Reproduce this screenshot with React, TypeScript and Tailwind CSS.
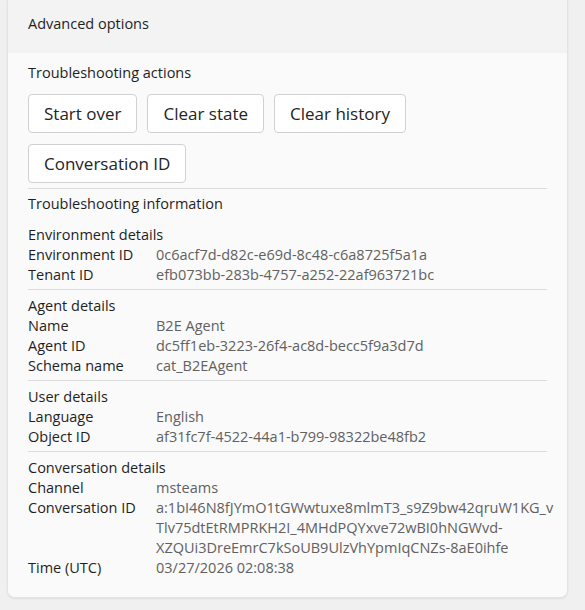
import React from "react";

const font = { fontFamily: '"Open Sans", "Noto Sans", sans-serif' };

function Row({ label, children }: { label: string; children: React.ReactNode }) {
  return (
    <div className="grid grid-cols-[128px_1fr]">
      <div className="text-[#1f1f1f]">{label}</div>
      <div className="text-[#616161]">{children}</div>
    </div>
  );
}

function Btn({ children }: { children: React.ReactNode }) {
  return (
    <button className="h-[39px] px-[15px] rounded-[4px] border border-[#d1d1d1] bg-white text-[17px] text-[#242424] leading-none">
      {children}
    </button>
  );
}

export default function App() {
  return (
    <div
      className="min-h-[610px] w-[585px] bg-[#f0f0f0] pl-[7px] pb-[14px] text-[14.5px] leading-[20px]"
      style={font}
    >
      <div className="w-[561px] border-x border-b border-[#e3e3e3] rounded-b-[8px] overflow-hidden shadow-[0_1px_2px_rgba(0,0,0,0.08)]">
        <div className="h-[53px] bg-[#f3f3f3] px-[20px] pt-[14px] text-[#1f1f1f]">Advanced options</div>
        <div className="bg-[#fafafa] px-[20px] pt-[10px] pb-[19px]">
          <div className="text-[#1f1f1f]">Troubleshooting actions</div>
          <div className="mt-[11px] flex flex-wrap gap-x-[10px] gap-y-[11px] w-[400px]">
            <Btn>Start over</Btn>
            <Btn>Clear state</Btn>
            <Btn>Clear history</Btn>
            <Btn>Conversation ID</Btn>
          </div>
          <div className="mt-[5px] border-t border-[#dcdcdc]" />
          <div className="mt-[5px] text-[#1f1f1f]">Troubleshooting information</div>
          <div className="mt-[11px] pb-[4px]">
            <div className="text-[#1f1f1f]">Environment details</div>
            <Row label="Environment ID">0c6acf7d-d82c-e69d-8c48-c6a8725f5a1a</Row>
            <Row label="Tenant ID">efb073bb-283b-4757-a252-22af963721bc</Row>
          </div>
          <div className="border-t border-[#dcdcdc] pt-[6px] pb-[4px]">
            <div className="text-[#1f1f1f]">Agent details</div>
            <Row label="Name">B2E Agent</Row>
            <Row label="Agent ID">dc5ff1eb-3223-26f4-ac8d-becc5f9a3d7d</Row>
            <Row label="Schema name">cat_B2EAgent</Row>
          </div>
          <div className="border-t border-[#dcdcdc] pt-[6px] pb-[4px]">
            <div className="text-[#1f1f1f]">User details</div>
            <Row label="Language">English</Row>
            <Row label="Object ID">af31fc7f-4522-44a1-b799-98322be48fb2</Row>
          </div>
          <div className="border-t border-[#dcdcdc] pt-[6px]">
            <div className="text-[#1f1f1f]">Conversation details</div>
            <Row label="Channel">msteams</Row>
            <Row label="Conversation ID">
              <span className="block whitespace-nowrap">a:1bI46N8fJYmO1tGWwtuxe8mlmT3_s9Z9bw42qruW1KG_v</span>
              <span className="block whitespace-nowrap">Tlv75dtEtRMPRKH2I_4MHdPQYxve72wBI0hNGWvd-</span>
              <span className="block whitespace-nowrap">XZQUi3DreEmrC7kSoUB9UlzVhYpmIqCNZs-8aE0ihfe</span>
            </Row>
            <Row label="Time (UTC)">03/27/2026 02:08:38</Row>
          </div>
        </div>
      </div>
    </div>
  );
}
